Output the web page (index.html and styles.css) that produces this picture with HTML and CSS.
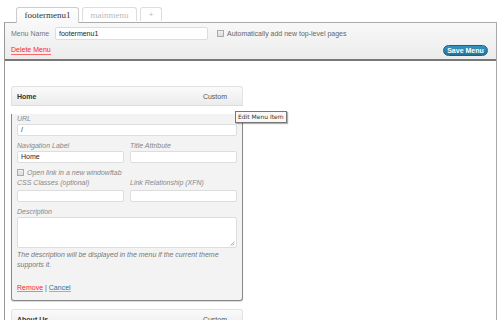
FILE: index.html
```html
<!DOCTYPE html>
<html>
<head>
<meta charset="utf-8">
<link rel="stylesheet" href="styles.css">
</head>
<body>
<div class="tabs">
  <div class="tab active">footermenu1</div>
  <div class="tab">mainmenu</div>
  <div class="tab plus">+</div>
</div>
<div class="menu-box">
  <div class="menu-header">
    <div class="row1">
      <span class="hlabel">Menu Name</span>
      <input class="name-input" type="text" value="footermenu1">
      <label class="auto"><span class="cb"></span>Automatically add new top-level pages</label>
    </div>
    <div class="row2">
      <a class="delete">Delete Menu</a>
      <button class="save">Save Menu</button>
    </div>
  </div>
  <div class="menu-body">
    <div class="card">
      <div class="card-head"><b>Home</b><span class="type">Custom</span></div>
      <div class="card-body">
        <div class="flabel first">URL</div>
        <div class="input full">/</div>
        <div class="cols">
          <div>
            <div class="flabel">Navigation Label</div>
            <div class="input">Home</div>
          </div>
          <div>
            <div class="flabel">Title Attribute</div>
            <div class="input"></div>
          </div>
        </div>
        <div class="check-row"><span class="cb"></span>Open link in a new windowftab</div>
        <div class="cols">
          <div>
            <div class="flabel tight">CSS Classes (optional)</div>
            <div class="input"></div>
          </div>
          <div>
            <div class="flabel tight">Link Relationship (XFN)</div>
            <div class="input"></div>
          </div>
        </div>
        <div class="flabel">Description</div>
        <div class="textarea"><svg class="grip" width="5" height="5" viewBox="0 0 5 5"><path d="M4.5 0.5 L0.5 4.5 M4.5 2.5 L2.5 4.5" stroke="#999" stroke-width="0.8"/></svg></div>
        <p class="help">The description will be displayed in the menu if the current theme supports it.</p>
        <div class="actions"><a class="remove">Remove</a> <span class="sep">|</span> <a class="cancel">Cancel</a></div>
      </div>
    </div>
    <div class="card second">
      <div class="card-head"><b>About Us</b><span class="type">Custom</span></div>
    </div>
  </div>
  <div class="tooltip">Edit Menu Item</div>
</div>
</body>
</html>
```
FILE: styles.css
```css
html, body { margin: 0; padding: 0; background: #fff; }
body { width: 500px; height: 320px; overflow: hidden; font-family: "Liberation Sans", Arial, sans-serif; font-size: 7px; color: #333; }

.tabs { display: flex; gap: 3px; padding: 7px 0 0 16px; height: 15px; position: relative; z-index: 2; }
.tab { height: 14px; box-sizing: border-box; border: 1px solid #ddd; border-bottom: none; border-radius: 3px 3px 0 0; background: #fff; font-family: "Liberation Serif", "Times New Roman", serif; font-size: 9px; line-height: 14px; color: #bbb; padding: 0 8px; }
.tab.active { width: 63px; height: 16px; color: #333; border-color: #ccc; background: linear-gradient(#fff, #f8f8f8); text-align: center; padding: 0; }
.tab:nth-child(2) { width: 55px; text-align: center; padding: 0; }
.tab.plus { width: 22px; text-align: center; padding: 0; font-family: "Liberation Sans", sans-serif; font-size: 8px; }

.menu-box { position: relative; margin-left: 4px; width: 493px; height: 298px; overflow: hidden; box-sizing: border-box; border: 1px solid #aaa; border-bottom: none; border-left-color: #999; }
.menu-header { height: 36px; background: linear-gradient(#f8f8f8, #ececec); border-bottom: 2px solid #777; box-sizing: content-box; padding: 0; }
.row1 { display: flex; align-items: center; height: 14px; padding: 3px 0 0 6px; }
.hlabel { color: #777; width: 44px; }
.name-input { width: 153px; height: 13px; box-sizing: border-box; border: 1px solid #ddd; border-radius: 2px; background: #fff; font-family: "Liberation Sans", Arial, sans-serif; font-size: 7px; color: #222; padding: 0 3px; margin: 0; outline: none; }
.auto { display: flex; align-items: center; margin-left: 9px; color: #666; }
.cb { display: inline-block; width: 7px; height: 7px; box-sizing: border-box; border: 1px solid #aaa; background: linear-gradient(#eee, #ddd); margin-right: 3px; }
.row2 { display: flex; justify-content: space-between; align-items: center; padding: 4px 8px 0 6px; height: 13px; }
.delete { color: #f22; border-bottom: 1px solid #f66; line-height: 8px; }
.save { height: 11px; width: 45px; margin: 0; padding: 0; border: 1px solid #1e5f85; border-radius: 6px; background: linear-gradient(#3592c4, #21759b); color: #fff; font-family: "Liberation Sans", Arial, sans-serif; font-size: 7px; font-weight: bold; line-height: 9px; }

.menu-body { padding: 25px 0 0 6px; }
.card { width: 232px; }
.card-head { height: 20px; box-sizing: border-box; border: 1px solid #e2e2e2; border-bottom: 1px solid #ddd; border-radius: 3px 3px 0 0; background: linear-gradient(#fafafa, #ececec); display: flex; justify-content: space-between; align-items: center; padding: 0 15px 0 5px; }
.card-head b { color: #333; }
.type { color: #555; }
.card-body { background: #f3f3f3; border: 1px solid #888; border-top: none; border-radius: 0 0 3px 3px; padding: 0 5px 8px 5px; box-shadow: 0 1px 1px rgba(0,0,0,0.15); }
.flabel { font-style: italic; color: #888; line-height: 9px; margin-top: 5px; margin-bottom: 1px; }
.flabel.first { margin-top: 8px; }
.flabel.tight { margin-top: 1px; margin-bottom: 3px; }
.input { height: 12px; box-sizing: border-box; border: 1px solid #ddd; background: #fff; border-radius: 2px; padding: 0 3px; line-height: 10px; color: #223; }
.input.full { width: 220px; }
.cols { display: grid; grid-template-columns: 107px 107px; column-gap: 6px; }
.check-row { display: flex; align-items: center; height: 10px; margin-top: 4px; font-style: italic; color: #888; }
.textarea { position: relative; height: 31px; box-sizing: border-box; border: 1px solid #ddd; background: #fff; border-radius: 2px; width: 220px; }
.grip { position: absolute; right: 1px; bottom: 1px; }
.help { margin: 2px 0 0 0; font-style: italic; color: #777; line-height: 9.5px; width: 215px; }
.actions { margin-top: 14px; line-height: 9px; }
.remove { color: #f22; border-bottom: 1px solid #f77; }
.sep { color: #555; }
.cancel { color: #21759b; border-bottom: 1px solid #8bb8d0; }
.card.second { margin-top: 8px; }

.tooltip { position: absolute; left: 230px; top: 88px; height: 12px; box-sizing: border-box; border: 1px solid #777; background: #f8f8f8; font-family: "DejaVu Sans", Verdana, sans-serif; font-size: 6px; line-height: 10px; padding: 0 2px; color: #333; box-shadow: 1px 1px 1px rgba(0,0,0,0.3); z-index: 3; }
```
